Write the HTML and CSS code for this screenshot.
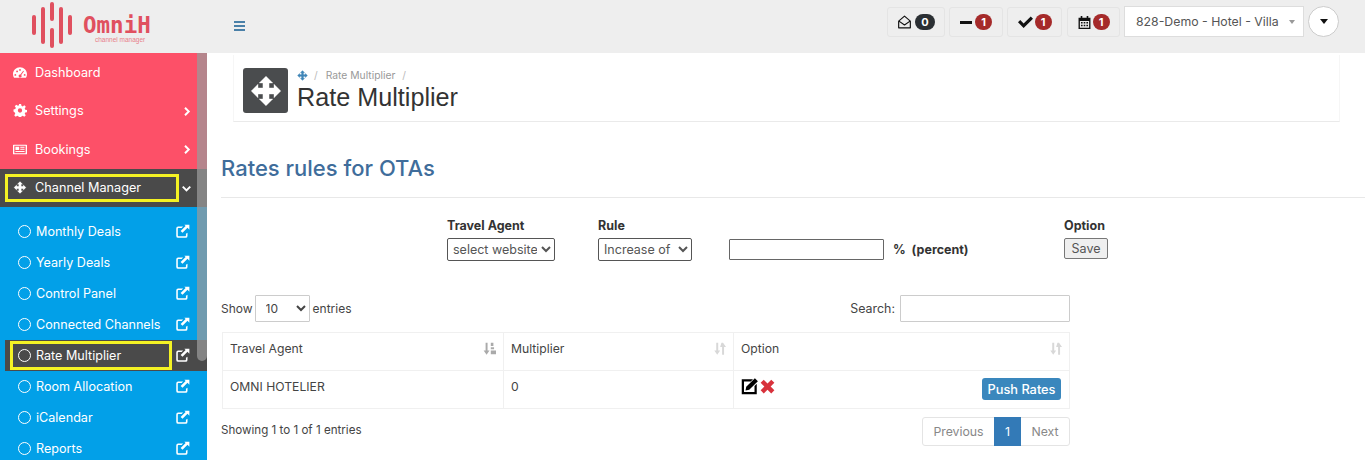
FILE: index.html
```html
<!DOCTYPE html>
<html lang="en">
<head>
<meta charset="utf-8">
<title>Rate Multiplier</title>
<link rel="stylesheet" href="styles.css">
</head>
<body>
<svg class="defs" width="0" height="0" aria-hidden="true">
  <symbol id="i-move" viewBox="-1 -1 26 26"><path stroke="currentColor" stroke-width=".3" stroke-linejoin="round" d="M12 0L17.500 5.500H14.500V9.500H18.500V6.500L24 12L18.500 17.500V14.500H14.500V18.500H17.500L12 24L6.500 18.500H9.500V14.500H5.500V17.500L0 12L5.500 6.500V9.500H9.500V5.500H6.500Z"/></symbol>
  <symbol id="i-gauge" viewBox="0 0 24 20"><path fill-rule="evenodd" d="M12 1C5.400 1 0 6.300 0 12.800c0 2.300.7 4.500 1.800 6.200h20.400c1.100-1.700 1.800-3.900 1.800-6.200C24 6.300 18.600 1 12 1zM4 12.500a1.600 1.600 0 1 1 0 3.200 1.600 1.600 0 0 1 0-3.200zM7 6.500a1.600 1.600 0 1 1 0 3.200 1.600 1.600 0 0 1 0-3.200zM12 4a1.600 1.600 0 1 1 0 3.200A1.600 1.600 0 0 1 12 4zM20 12.500a1.600 1.600 0 1 1 0 3.200 1.600 1.600 0 0 1 0-3.200zM17.500 7l1.300.8-4.600 6.500a2.600 2.600 0 1 1-1.500-.9z"/></symbol>
  <symbol id="i-gear" viewBox="0 0 24 24"><path fill-rule="evenodd" d="M10 0h4l.7 3.400 2.300 1 2.900-2 2.800 2.800-2 2.900 1 2.300 3.300.6v4l-3.300.7-1 2.300 2 2.900-2.800 2.800-2.900-2-2.300 1-.7 3.300h-4l-.7-3.300-2.300-1-2.900 2-2.800-2.800 2-2.900-1-2.300L0 14v-4l3.300-.6 1-2.300-2-2.900 2.800-2.800 2.900 2 2.300-1zM12 8a4 4 0 1 0 0 8 4 4 0 0 0 0-8z"/></symbol>
  <symbol id="i-news" viewBox="0 0 26 20"><path fill-rule="evenodd" d="M1 1h24a1 1 0 0 1 1 1v16a1 1 0 0 1-1 1H1a1 1 0 0 1-1-1V2a1 1 0 0 1 1-1zm1.500 2v14h21V3zM4.500 5h7v6h-7zM13.500 5h8v1.800h-8zM13.500 8.500h8v1.800h-8zM4.500 12.800h17v1.800h-17z"/></symbol>
  <symbol id="i-edit" viewBox="0 0 24 24"><path d="M20 14v5a3 3 0 0 1-3 3H5a3 3 0 0 1-3-3V7a3 3 0 0 1 3-3h8l-2.500 2.500H5.500a1 1 0 0 0-1 1v11a1 1 0 0 0 1 1h11a1 1 0 0 0 1-1v-3z"/><path d="M15 1h8v8l-3-3-8 8-3-3 8-8z"/></symbol>
  <symbol id="i-pencil" viewBox="0 0 24 24"><path fill-rule="evenodd" d="M1 3h15l-3 3H4v14h14v-8l3-3v14H1z"/><path d="M6 18l1-5L18.500 1.500l4 4L11 17z"/></symbol>
  <symbol id="i-mail" viewBox="0 0 24 24"><path fill="none" stroke="currentColor" stroke-width="2" stroke-linejoin="round" d="M2 10.500L12 2l10 8.500V22H2zM2.500 10.500L12 17l9.500-6.500"/></symbol>
  <symbol id="i-check" viewBox="0 0 24 20"><path d="M9 19.500L0 10.500l3.600-3.600L9 12.300 20.400 1 24 4.600z"/></symbol>
  <symbol id="i-cal" viewBox="0 0 24 24"><path fill-rule="evenodd" d="M5 0h3v3h8V0h3v3h4v21H1V3h4zM3.500 9v12.500h17V9zM5.500 11h3v3h-3zM10.500 11h3v3h-3zM15.500 11h3v3h-3zM5.500 16h3v3h-3zM10.500 16h3v3h-3zM15.500 16h3v3h-3z"/></symbol>
  <symbol id="i-cross" viewBox="0 0 24 24"><path d="M6 1l6 6 6-6 5 5-6 6 6 6-5 5-6-6-6 6-5-5 6-6-6-6z"/></symbol>
  <symbol id="i-sort" viewBox="0 0 20 20"><path d="M5 1h3v12h3l-4.500 6.500L2 13h3zM13 1h2.500L20 7.500h-3v12h-3v-12h-3z"/></symbol>
  <symbol id="i-sort-on" viewBox="0 0 20 20"><path d="M4 1h3v12h3l-4.500 6.500L1 13h3zM12 1h4v5h-4zM12 8h5v3h-5zM12 13h8v6h-8z"/></symbol>
  <symbol id="i-chev" viewBox="0 0 12 12"><path fill="none" stroke="currentColor" stroke-width="2.600" d="M4 1l5 5-5 5"/></symbol>
  <symbol id="i-chevd" viewBox="0 0 12 12"><path fill="none" stroke="currentColor" stroke-width="2.600" d="M1 3.500l5 5 5-5"/></symbol>
</svg>

<header class="topbar">
  <div class="logo">
    <svg class="logo-mark" viewBox="0 0 40 46" aria-hidden="true">
      <g fill="#e0505f">
        <rect x="0" y="13" width="4" height="20" rx="2"/>
        <rect x="9" y="5" width="4" height="37" rx="2"/>
        <rect x="18" y="0" width="4" height="19" rx="2"/>
        <rect x="18" y="26" width="4" height="20" rx="2"/>
        <rect x="27" y="5" width="4" height="37" rx="2"/>
        <rect x="36" y="13" width="4" height="20" rx="2"/>
      </g>
    </svg>
    <div class="logo-text">
      <span class="logo-name">OmniH</span>
      <span class="logo-sub">channel manager</span>
    </div>
  </div>
  <button class="burger" aria-label="menu"><span></span><span></span><span></span></button>
  <div class="top-actions">
    <span class="chip chip-a"><svg class="ti"><use href="#i-mail"/></svg><b class="count count-dark">0</b></span>
    <span class="chip chip-b"><span class="dash"></span><b class="count">1</b></span>
    <span class="chip chip-c"><svg class="ti"><use href="#i-check"/></svg><b class="count">1</b></span>
    <span class="chip chip-d"><svg class="ti ti-s"><use href="#i-cal"/></svg><b class="count">1</b></span>
    <span class="hotel"><span>828-Demo - Hotel - Villa</span><i class="caret"></i></span>
    <span class="round"><i class="caret caret-dark"></i></span>
  </div>
</header>

<div class="shell">
  <aside class="sidebar">
    <nav class="menu">
      <a class="mi"><svg class="mi-ic"><use href="#i-gauge"/></svg><span>Dashboard</span></a>
      <a class="mi"><svg class="mi-ic"><use href="#i-gear"/></svg><span>Settings</span><svg class="chev"><use href="#i-chev"/></svg></a>
      <a class="mi"><svg class="mi-ic"><use href="#i-news"/></svg><span>Bookings</span><svg class="chev"><use href="#i-chev"/></svg></a>
      <a class="mi mi-open"><svg class="mi-ic"><use href="#i-move"/></svg><span>Channel Manager</span><svg class="chev"><use href="#i-chevd"/></svg><em class="mark mark-top"></em></a>
      <div class="sub">
        <a class="si"><i class="ring"></i><span>Monthly Deals</span><svg class="ext"><use href="#i-edit"/></svg></a>
        <a class="si"><i class="ring"></i><span>Yearly Deals</span><svg class="ext"><use href="#i-edit"/></svg></a>
        <a class="si"><i class="ring"></i><span>Control Panel</span><svg class="ext"><use href="#i-edit"/></svg></a>
        <a class="si"><i class="ring"></i><span>Connected Channels</span><svg class="ext"><use href="#i-edit"/></svg></a>
        <a class="si si-on"><i class="ring"></i><span>Rate Multiplier</span><svg class="ext"><use href="#i-edit"/></svg><em class="mark mark-sub"></em></a>
        <a class="si"><i class="ring"></i><span>Room Allocation</span><svg class="ext"><use href="#i-edit"/></svg></a>
        <a class="si"><i class="ring"></i><span>iCalendar</span><svg class="ext"><use href="#i-edit"/></svg></a>
        <a class="si"><i class="ring"></i><span>Reports</span><svg class="ext"><use href="#i-edit"/></svg></a>
      </div>
    </nav>
    <div class="thumb"></div>
  </aside>

  <main class="content">
    <section class="title-card">
      <div class="title-ic"><svg><use href="#i-move"/></svg></div>
      <div class="title-txt">
        <div class="crumbs"><svg class="crumb-ic"><use href="#i-move"/></svg><i>/</i><span>Rate Multiplier</span><i>/</i></div>
        <h1>Rate Multiplier</h1>
      </div>
    </section>

    <h2 class="section">Rates rules for OTAs</h2>

    <form class="rule-form">
      <div class="fld fld-agent">
        <label>Travel Agent</label>
        <select class="fs fs-agent"><option>select website</option></select>
      </div>
      <div class="fld fld-rule">
        <label>Rule</label>
        <select class="fs fs-rule"><option>Increase of</option></select>
      </div>
      <div class="fld-pct">
        <input class="pct" type="text" aria-label="percent">
        <strong>%&nbsp; (percent)</strong>
      </div>
      <div class="fld">
        <label>Option</label>
        <button class="save" type="button">Save</button>
      </div>
    </form>

    <div class="dt">
      <div class="dt-top">
        <div class="dt-len">Show <select class="len"><option>10</option></select> entries</div>
        <div class="dt-search">Search: <input class="search" type="text" aria-label="Search"></div>
      </div>
      <table class="grid">
        <thead>
          <tr>
            <th class="c1"><div class="th"><span>Travel Agent</span><svg class="sort sort-on"><use href="#i-sort-on"/></svg></div></th>
            <th class="c2"><div class="th"><span>Multiplier</span><svg class="sort"><use href="#i-sort"/></svg></div></th>
            <th class="c3"><div class="th"><span>Option</span><svg class="sort"><use href="#i-sort"/></svg></div></th>
          </tr>
        </thead>
        <tbody>
          <tr>
            <td>OMNI HOTELIER</td>
            <td>0</td>
            <td class="opt">
              <div class="opt-row">
                <svg class="a-edit"><use href="#i-pencil"/></svg>
                <svg class="a-del"><use href="#i-cross"/></svg>
                <button class="push" type="button">Push Rates</button>
              </div>
            </td>
          </tr>
        </tbody>
      </table>
      <div class="dt-foot">
        <div class="dt-info">Showing 1 to 1 of 1 entries</div>
        <div class="pager"><span class="pg">Previous</span><span class="pg pg-on">1</span><span class="pg pg-next">Next</span></div>
      </div>
    </div>
  </main>
</div>
</body>
</html>
```

FILE: styles.css
```css
* { box-sizing: border-box; }
html, body { margin: 0; height: 460px; overflow: hidden; }
body { font-family: "Inter", "Noto Sans", sans-serif; font-size: 12px; color: #444; background: #fff; }
.defs { position: absolute; }
svg { fill: currentColor; display: block; }

/* top bar */
.topbar { height: 53px; background: #eeeeee; display: flex; align-items: flex-start; }
.logo { width: 207px; height: 53px; padding: 2px 0 0 32px; display: flex; flex: none; }
.logo-mark { width: 40px; height: 46px; flex: none; }
.logo-text { margin-left: 11px; padding-top: 11px; display: flex; flex-direction: column; color: #e0505f; line-height: 1; }
.logo-name { font-family: "DejaVu Sans Mono", monospace; font-weight: 700; font-size: 22.500px; line-height: 24px; }
.logo-sub { font-family: "Liberation Sans", sans-serif; font-size: 6.500px; margin: 0 0 0 12px; color: #e8808a; }
.burger { width: 11px; margin: 21px 0 0 27px; padding: 0; border: 0; background: none; display: flex; flex-direction: column; gap: 2px; }
.burger span { height: 2px; background: #4a80a8; }
.top-actions { margin-left: auto; margin-right: 26px; padding-top: 6px; display: flex; align-items: flex-start; }
.chip { height: 30px; margin-top: 1px; background: #eee; border: 1px solid #e4e4e4; border-radius: 3px; display: flex; align-items: center; justify-content: center; gap: 2px; color: #111; margin-right: 4px; }
.chip-a { width: 58px; gap: 3px; }
.chip-b { width: 54px; gap: 3px; }
.chip-c { width: 55px; margin-right: 5px; }
.chip-d { width: 53px; margin-right: 4px; }
.ti { width: 15px; height: 14px; }
.ti-s { width: 13px; height: 13px; }
.dash { width: 12px; height: 3px; background: #111; }
.count { min-width: 17px; height: 16px; padding: 0 3px; border-radius: 9px; background: #a52a2a; color: #fff; font-size: 11px; font-weight: 700; line-height: 16px; text-align: center; }
.count-dark { min-width: 20px; background: #2b2f33; }
.hotel { width: 180px; height: 31px; background: #fff; border: 1px solid #ddd; display: flex; align-items: center; justify-content: space-between; padding: 0 8px 0 11px; font-size: 12.300px; color: #555; }
.caret { width: 0; height: 0; border-left: 3px solid transparent; border-right: 3px solid transparent; border-top: 4px solid #999; }
.round { width: 31px; height: 31px; margin-left: 4px; border-radius: 50%; background: #fff; border: 1px solid #ccc; display: flex; align-items: center; justify-content: center; }
.caret-dark { border-left-width: 4px; border-right-width: 4px; border-top: 5px solid #111; }

/* layout */
.shell { display: flex; height: 407px; }
.sidebar { width: 207px; flex: none; position: relative; overflow: hidden; background: #02a0e8; }
.menu { display: flex; flex-direction: column; }
.mi { height: 38.500px; background: #fd5068; color: #fff; display: flex; align-items: center; padding: 0 13px; position: relative; font-size: 12.700px; }
.mi span { flex: 1; margin-left: 8px; }
.mi-ic { width: 14px; height: 13px; flex: none; }
.chev { width: 9px; height: 9px; flex: none; position: absolute; left: 182px; top: 15px; }
.mi-open { height: 38px; background: #4a4a4a; }
.mark { position: absolute; border: 3px solid #f4f224; }
.mark-top { left: 5px; top: 5px; width: 174px; height: 28px; }
.sub { padding-top: 9.500px; display: flex; flex-direction: column; }
.si { height: 31px; margin-left: 5px; padding-left: 13px; color: #fff; display: flex; align-items: center; position: relative; font-size: 12.600px; }
.si span { flex: 1; margin-left: 5px; }
.si-on { background: #4a4a4a; }
.ring { width: 13px; height: 13px; border: 1.500px solid #fff; border-radius: 50%; flex: none; }
.ext { width: 15px; height: 15px; flex: none; margin-right: 17px; }
.mark-sub { left: 5px; top: 1px; width: 162px; height: 29px; }
.thumb { position: absolute; top: 0; left: 197px; width: 10px; height: 308px; background: rgba(154, 154, 154, .73); border-radius: 0 0 5px 5px; }

/* main */
.content { flex: 1; min-width: 0; padding-left: 14px; }
.title-card { width: 1107px; margin: 2px 0 0 12px; height: 67px; padding: 13px 0 0 9px; border: 1px solid #f6f6f6; border-bottom-color: #eaeaea; border-top: 0; display: flex; }
.title-ic { width: 45px; height: 45px; border-radius: 3px; background: #4a4c4e; color: #fff; display: flex; align-items: center; justify-content: center; flex: none; }
.title-ic svg { width: 32px; height: 32px; }
.title-txt { margin-left: 9px; margin-top: 0; }
.crumbs { display: flex; align-items: center; height: 14px; font-size: 10.300px; color: #999; }
.crumbs i { font-style: normal; margin: 0 7px; color: #bbb; }
.crumbs i:first-of-type { margin: 0 8px 0 6px; }
.crumb-ic { width: 11px; height: 11px; color: #3f86b8; }
.title-txt h1 { margin: 0; font: 400 25.200px/30px "Liberation Sans", Arial, sans-serif; color: #333; }
.section { margin: 30px 0 0; padding-top: 1px; padding-bottom: 14px; height: 46px; width: 1144px; border-bottom: 1px solid #e8e8e8; font-size: 22px; font-weight: 500; line-height: 30px; color: #3f6d9b; }

.rule-form { display: flex; align-items: flex-start; margin-top: 21px; padding-left: 226px; }
.fld { display: flex; flex-direction: column; }
.fld label { font-size: 12.500px; font-weight: 700; color: #333; line-height: 14px; margin-bottom: 5px; }
.fld-agent { width: 151px; }
.fld-rule { width: 131px; }
.fs { height: 23px; background: #fff; border: 1px solid #555; border-radius: 2px; font: 12.500px "Inter", sans-serif; color: #555; padding: 0 1px; }
.fs-agent { width: 108px; }
.fs-rule { width: 94px; }
.fld-pct { width: 335px; display: flex; align-items: center; padding-top: 20px; gap: 9px; }
.pct { width: 155px; height: 21px; border: 1px solid #666; border-radius: 1px; background: #fff; }
.fld-pct strong { color: #333; font-size: 12.500px; }
.save { width: 44px; height: 21px; padding: 0; background: #efefef; border: 1px solid #777; border-radius: 2px; font: 12.500px "Inter", sans-serif; color: #555; }

.dt { width: 849px; margin-top: 34px; }
.dt-top { display: flex; justify-content: space-between; align-items: center; height: 27px; }
.dt-len, .dt-search { display: flex; align-items: center; gap: 3px; color: #444; font-size: 12px; }
.dt-search { gap: 5px; font-size: 12.400px; padding-bottom: 1px; }
.len { width: 55px; height: 27px; margin-left: -1px; background: #fff; border: 1px solid #ccc; border-radius: 1px; font: 12px "Inter", sans-serif; color: #444; padding: 0 6px; }
.dt-len { padding-bottom: 1px; }
.search { width: 170px; height: 27px; background: #fff; border: 1px solid #ccc; border-radius: 1px; }
.grid { margin: 10px 0 0 1px; width: 848px; table-layout: fixed; border-collapse: collapse; border: 1px solid #f0f0f0; font-size: 12.200px; }
.grid th, .grid td { border: 1px solid #f0f0f0; padding: 0 7px 0 7px; text-align: left; font-weight: 400; color: #444; }
.grid th { height: 38px; padding-bottom: 7px; }
.grid td { height: 38px; vertical-align: top; padding-top: 8px; }
.c1 { width: 281px; }
.c2 { width: 230px; }
.th { display: flex; justify-content: space-between; align-items: center; }
.sort { width: 13px; height: 13px; color: #d8d8d8; }
.sort-on { color: #aaa; }
.grid td.opt { padding: 6px 8px 0 7px; }
.opt-row { display: flex; align-items: flex-start; }
.a-edit { width: 18px; height: 18px; color: #000; }
.a-del { width: 15px; height: 15px; margin: 2px 0 0 1px; color: #d8323c; }
.push { margin: 1px 0 0 auto; width: 79px; height: 22px; padding: 0; background: #3a87bd; border: 0; border-radius: 3px; color: #fff; font: 500 12.800px "Inter", sans-serif; }
.dt-foot { display: flex; justify-content: space-between; margin-top: 8px; }
.dt-info { padding-top: 6px; color: #444; font-size: 11.600px; }
.pager { display: flex; height: 29px; border: 1px solid #e4e4e4; border-radius: 3px; }
.pg { display: flex; align-items: center; justify-content: center; width: 71px; color: #888; font-size: 12.300px; }
.pg-on { width: 27px; background: #337ab7; color: #fff; margin: -1px 0; }
.pg-next { width: 48px; }
```
